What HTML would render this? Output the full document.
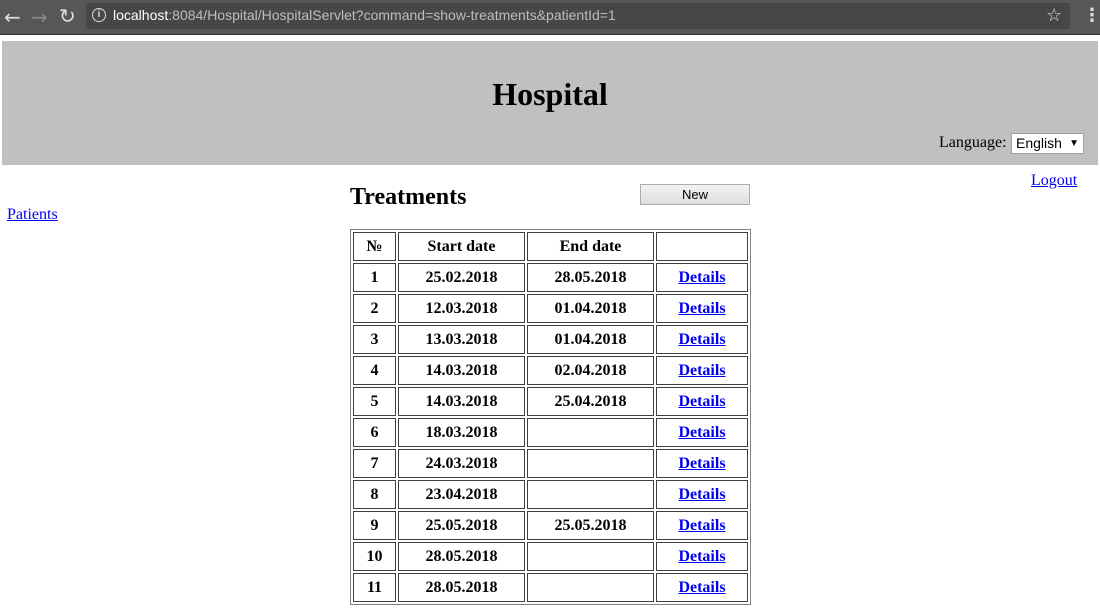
<!DOCTYPE html>
<html><head><style>
body{margin:0;width:1100px;height:609px;overflow:hidden;background:#fff;font-family:"Liberation Serif",serif;position:relative}
.a{position:absolute}
.bar{left:0;top:0;width:1100px;height:34px;background:#575757;border-bottom:1px solid #333}
.omni{left:86px;top:3px;width:984px;height:26px;background:#474747;border-radius:2px}
.url{left:113px;top:7px;font:14px "Liberation Sans",sans-serif;color:#bdbdbd}
.url b{color:#fff;font-weight:normal}
.hdr{left:2px;top:41px;width:1096px;height:124px;background:#c0c0c0}
table{position:absolute;left:350px;top:229px;border:1px solid #808080;border-spacing:2px;border-collapse:separate}
td,th{border:1px solid #404040;height:27px;padding:0;text-align:center;font-weight:bold;font-size:16px}
a{color:#0000ee;text-decoration:underline}
</style></head><body>
<div class="a bar"></div>
<div class="a" style="left:4px;top:5px;color:#ddd;font:20px 'DejaVu Sans',sans-serif">←</div>
<div class="a" style="left:31px;top:5px;color:#888;font:20px 'DejaVu Sans',sans-serif">→</div>
<div class="a" style="left:59px;top:4px;color:#ddd;font:20px 'DejaVu Sans',sans-serif">↻</div>
<div class="a omni"></div>
<div class="a" style="left:92px;top:8px;width:12px;height:12px;border:1.5px solid #ddd;border-radius:50%;color:#ddd;font:bold 10px 'Liberation Sans';text-align:center;line-height:12px">i</div>
<div class="a url"><b>localhost</b>:8084/Hospital/HospitalServlet?command=show-treatments&amp;patientId=1</div>
<div class="a" style="left:1046px;top:5px;color:#ddd;font:18px 'DejaVu Sans',sans-serif">☆</div>
<div class="a" style="left:1083px;top:5px;color:#ddd;font:bold 18px 'DejaVu Sans',sans-serif">⋮</div>
<div class="a hdr"></div>
<div class="a" style="left:0;width:1100px;top:76px;text-align:center;font-weight:bold;font-size:32px">Hospital</div>
<div class="a" style="left:939px;top:134px;font-size:16px">Language:</div>
<div class="a" style="left:1011px;top:133px;width:73px;height:21px;box-sizing:border-box;background:#fff;border:1px solid #a0a0a0;font:14px 'Liberation Sans',sans-serif;line-height:19px;padding-left:4px">English<span style="position:absolute;right:4px;font-size:10px">▼</span></div>
<a class="a" style="left:1031px;top:172px;font-size:16px">Logout</a>
<a class="a" style="left:7px;top:206px;font-size:16px">Patients</a>
<div class="a" style="left:350px;top:184px;font-weight:bold;font-size:24px">Treatments</div>
<div class="a" style="left:640px;top:184px;width:108px;height:19px;border:1px solid #adadad;background:linear-gradient(#f3f3f3,#dedede);font:13px 'Liberation Sans',sans-serif;text-align:center;line-height:19px">New</div>
<table>
<tr><td style="width:41px">№</td><td style="width:125px">Start date</td><td style="width:125px">End date</td><td style="width:90px"></td></tr>
<tr><td>1</td><td>25.02.2018</td><td>28.05.2018</td><td><a>Details</a></td></tr>
<tr><td>2</td><td>12.03.2018</td><td>01.04.2018</td><td><a>Details</a></td></tr>
<tr><td>3</td><td>13.03.2018</td><td>01.04.2018</td><td><a>Details</a></td></tr>
<tr><td>4</td><td>14.03.2018</td><td>02.04.2018</td><td><a>Details</a></td></tr>
<tr><td>5</td><td>14.03.2018</td><td>25.04.2018</td><td><a>Details</a></td></tr>
<tr><td>6</td><td>18.03.2018</td><td></td><td><a>Details</a></td></tr>
<tr><td>7</td><td>24.03.2018</td><td></td><td><a>Details</a></td></tr>
<tr><td>8</td><td>23.04.2018</td><td></td><td><a>Details</a></td></tr>
<tr><td>9</td><td>25.05.2018</td><td>25.05.2018</td><td><a>Details</a></td></tr>
<tr><td>10</td><td>28.05.2018</td><td></td><td><a>Details</a></td></tr>
<tr><td>11</td><td>28.05.2018</td><td></td><td><a>Details</a></td></tr>
</table>
</body></html>
